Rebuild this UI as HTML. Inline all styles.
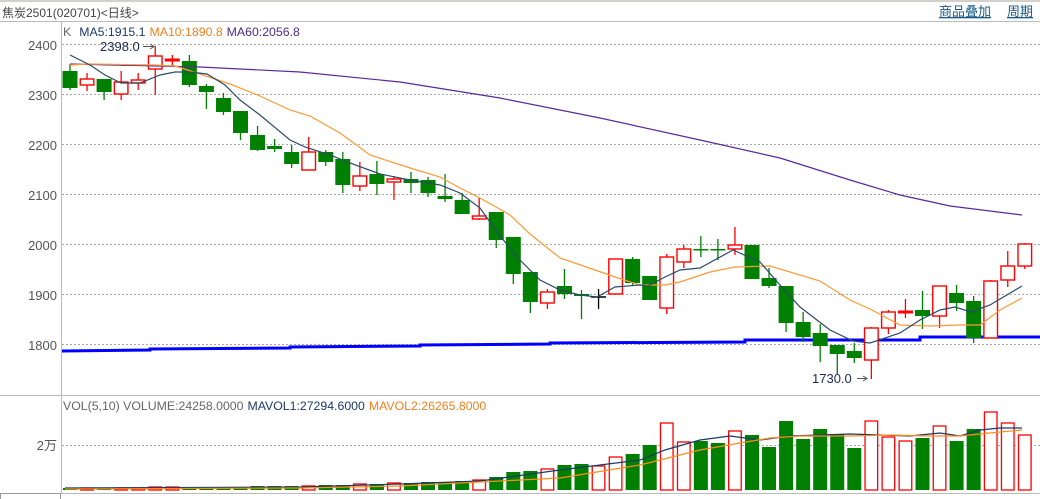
<!DOCTYPE html>
<html><head><meta charset="utf-8"><style>
body{margin:0;width:1040px;height:499px;overflow:hidden;background:#fff;font-family:"Liberation Sans","Noto Sans CJK SC",sans-serif;}
svg{position:absolute;left:0;top:0}
</style></head><body>
<svg id="s" width="1040" height="499" xmlns="http://www.w3.org/2000/svg" font-family="Liberation Sans, Noto Sans CJK SC, sans-serif">
<rect x="0" y="0" width="1040" height="2" fill="#d4d0cc"/>
<line x1="0" y1="21.5" x2="1040" y2="21.5" stroke="#bbb"/>
<text x="2" y="17" font-size="12" fill="#444">焦炭2501(020701)&lt;日线&gt;</text>
<text x="939" y="16" font-size="13" fill="#1a5a8a" text-decoration="underline">商品叠加</text>
<text x="1007" y="16" font-size="13" fill="#1a5a8a" text-decoration="underline">周期</text>
<line x1="61.5" y1="22" x2="61.5" y2="494" stroke="#bbb"/>
<line x1="0" y1="395.5" x2="1040" y2="395.5" stroke="#bbb"/>
<line x1="0" y1="493.5" x2="1040" y2="493.5" stroke="#bbb"/>
<rect x="0.5" y="493.5" width="60" height="10" fill="none" stroke="#999"/>
<g font-size="13" fill="#555" text-anchor="end">
<text x="57" y="50">2400</text><text x="57" y="100">2300</text><text x="57" y="150">2200</text><text x="57" y="200">2100</text><text x="57" y="250">2000</text><text x="57" y="300">1900</text><text x="57" y="350">1800</text>
<text x="57" y="450">2万</text>
</g>
<g stroke="#aaa" stroke-dasharray="2,2">
<line x1="62" y1="44.5" x2="1040" y2="44.5"/><line x1="62" y1="94.5" x2="1040" y2="94.5"/><line x1="62" y1="144.5" x2="1040" y2="144.5"/><line x1="62" y1="194.5" x2="1040" y2="194.5"/><line x1="62" y1="244.5" x2="1040" y2="244.5"/><line x1="62" y1="294.5" x2="1040" y2="294.5"/><line x1="62" y1="344.5" x2="1040" y2="344.5"/><line x1="62" y1="445.5" x2="1040" y2="445.5"/>
</g>
<text x="63" y="36" font-size="12.3"><tspan fill="#666">K</tspan><tspan fill="#1a3a6a" dx="8">MA5:1915.1</tspan><tspan fill="#f08020" dx="4">MA10:1890.8</tspan><tspan fill="#4a2a8a" dx="4">MA60:2056.8</tspan></text>
<text x="63" y="410" font-size="12.3"><tspan fill="#666">VOL(5,10) VOLUME:24258.0000</tspan><tspan fill="#1a3a6a" dx="4">MAVOL1:27294.6000</tspan><tspan fill="#f08020" dx="4">MAVOL2:26265.8000</tspan></text>
<text x="100" y="51" font-size="13" fill="#1a2a50">2398.0</text>
<path d="M143 46.5H154M150 44l4 2.5-4 2.5" stroke="#555" fill="none"/>
<text x="812" y="383" font-size="13" fill="#1a2a50">1730.0</text>
<path d="M857 378.5H867M863 376l4 2.5-4 2.5" stroke="#555" fill="none"/>
<polyline fill="none" stroke="#0000ff" stroke-width="3" points="62,351 150,350 150,349 290,348 290,347 420,346 420,345 550,344 550,343 745,342 745,340 920,340 920,337 1040,337"/>
<g id="c"></g>
</svg>
<script>
var C=[["g",71,88,64,90],["r",79,85,73,91],["g",79,92,79,100],["r",82,94,71,100],["r",80,83,73,90],["r",56,69,46,95],["r",59,61,55,67],["g",61,85,55,87],["g",86,92,84,109],["g",98,112,93,115],["g",111,133,111,140],["g",135,150,126,151],["g",146,149,139,152],["g",152,164,145,168],["r",152,170,137,170],["g",152,162,150,166],["g",159,185,152,193],["r",176,186,162,191],["g",174,184,161,195],["r",179,182,176,200],["g",179,183,172,193],["g",180,193,177,197],["g",196,199,174,202],["g",200,214,193,214],["r",216,219,198,220],["g",212,240,212,248],["g",237,274,237,284],["g",272,302,272,313],["r",292,303,289,309],["g",286,294,269,299],["g",294,296,290,319],["k",297,297,289,309],["r",259,294,259,294],["g",259,283,257,285],["g",276,300,276,300],["r",257,308,254,314],["r",249,262,245,268],["g",249,250,236,257],["g",249,250,239,260],["r",245,249,227,255],["g",245,279,245,279],["g",278,286,268,288],["g",286,323,286,332],["g",322,337,312,342],["g",333,346,324,362],["g",345,354,345,375],["g",351,358,343,363],["r",328,360,327,379],["r",312,328,310,334],["r",311,312,299,318],["g",310,316,291,329],["r",286,316,286,328],["g",293,303,285,311],["g",301,338,296,343],["r",281,338,280,338],["r",266,280,251,287],["r",244,266,243,269]];
var V=[488,488,488,488,488,487,487,487,487,487,487,486,486,486,486,485,485,484,484,483,483,482,482,481,480,477,472,471,469,465,464,466,457,454,445,423,442,441,443,431,435,447,421,439,429,434,448,421,437,441,438,426,441,429,412,423,435];
var h="";
C.forEach(function(c,i){var x=70+17.05*i,t=c[0],col=t=="g"?"#008000":t=="r"?"#ff0000":"#000";
h+='<line x1="'+x+'" y1="'+c[3]+'" x2="'+x+'" y2="'+c[4]+'" stroke="'+col+'" stroke-width="1.3"/>';
var bh=Math.max(c[2]-c[1],1.5);
if(t=="g")h+='<rect x="'+(x-7.5)+'" y="'+c[1]+'" width="15" height="'+bh+'" fill="#008000"/>';
else if(t=="r"){if(bh<3)h+='<rect x="'+(x-7.5)+'" y="'+(c[1]-0.5)+'" width="15" height="3" fill="#ff0000"/>';else h+='<rect x="'+(x-6.8)+'" y="'+c[1]+'" width="13.6" height="'+bh+'" fill="#fff" stroke="#ff0000" stroke-width="1.4"/>';}
else h+='<line x1="'+(x-7.5)+'" y1="'+c[1]+'" x2="'+(x+7.5)+'" y2="'+c[1]+'" stroke="#000" stroke-width="1.5"/>';
var vt=V[i],vh=490-vt;
if(t=="g")h+='<rect x="'+(x-7)+'" y="'+vt+'" width="14" height="'+vh+'" fill="#008000"/>';
else h+='<rect x="'+(x-6.3)+'" y="'+vt+'" width="12.6" height="'+vh+'" fill="#fff" stroke="#ff0000" stroke-width="1.3"/>';
});
function pl(p,c,w){return '<polyline fill="none" stroke="'+c+'" stroke-width="'+(w||1.2)+'" points="'+p+'"/>';}
h+=pl("70,64 200,67 300,72 400,82 500,98 600,118 700,140 780,158 850,180 900,195 950,206 1022,215","#5a2a9a");
h+=pl("70,65 90,64 155,65 175,66 200,74 230,84 260,96 290,110 310,116 340,133 370,155 410,168 440,177 460,188 480,198 510,215 530,234 560,258 595,270 615,277 640,285 665,285 680,282 710,272 735,267 770,266 820,281 850,300 870,309 900,325 930,326 960,325 980,325 1000,310 1022,298","#ff9933");
h+=pl("70,55 90,65 105,75 121,83 140,83 160,75 175,72 190,72 207,74 225,85 240,100 260,115 290,140 305,147 330,155 350,163 380,174 410,180 440,185 460,193 480,208 500,236 520,260 540,280 560,290 580,295 597,297 615,287 640,285 648,286 665,277 680,270 700,268 733,250 760,262 780,285 800,307 830,330 853,341 870,343 900,333 920,320 940,310 955,307 971,312 990,305 1022,286","#2a4a6a");
h+=pl("65,488 300,487 400,484 480,481 560,470 640,460 665,450 700,440 730,436 760,440 790,436 820,435 850,434 880,435 910,436 940,433 960,436 980,430 1000,428 1022,428","#1a3a6a");
h+=pl("65,489 300,488 400,486 480,482 560,478 640,465 700,450 740,443 770,438 800,436 850,436 890,435 930,436 960,436 1000,432 1022,430","#ff8c1a");
document.getElementById("c").innerHTML=h;
</script>
</body></html>
